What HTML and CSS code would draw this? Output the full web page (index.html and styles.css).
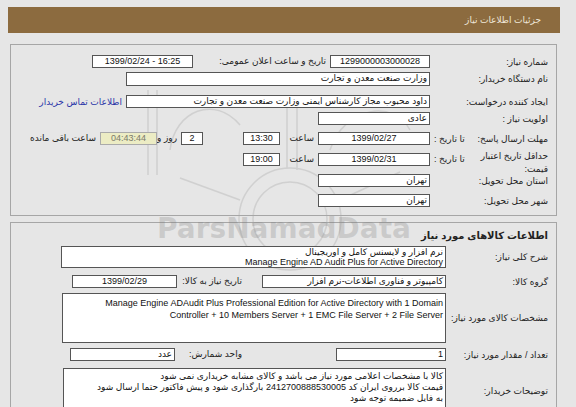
FILE: index.html
```html
<!DOCTYPE html>
<html lang="fa" dir="rtl">
<head>
<meta charset="utf-8">
<title>جزئیات اطلاعات نیاز</title>
<link rel="stylesheet" href="styles.css">
</head>
<body>
<svg class="logo" width="576" height="407" viewBox="0 0 576 407" aria-hidden="true">
  <g fill="none" stroke="#cbcbcb" stroke-width="1.5">
    <circle cx="290" cy="219" r="51"/>
    <circle cx="290" cy="219" r="37"/>
    <line x1="287" y1="95" x2="287" y2="168"/>
    <line x1="297" y1="95" x2="297" y2="170"/>
    <line x1="148" y1="90" x2="148" y2="175"/>
    <line x1="157" y1="90" x2="157" y2="175"/>
    <path d="M240 200 L180 178"/>
    <path d="M340 200 L400 172"/>
    <path d="M170 150 C 175 110, 215 95, 240 125"/>
    <path d="M330 150 C 345 105, 395 100, 410 130"/>
  </g>
</svg>

<div class="header">جزئیات اطلاعات نیاز</div>

<div class="panel p1">
  <div class="row r1">
    <div class="lbl">شماره نیاز:</div>
    <div class="box c w100">1299000003000028</div>
    <div class="lbl2 w137">تاریخ و ساعت اعلان عمومی:</div>
    <div class="box c w101 ltrbox">1399/02/24 - 16:25</div>
  </div>
  <div class="row r2">
    <div class="lbl">نام دستگاه خریدار:</div>
    <div class="box w304">وزارت صنعت معدن و تجارت</div>
  </div>
  <div class="row r3">
    <div class="lbl">ایجاد کننده درخواست:</div>
    <div class="box w304">داود محبوب مجاز کارشناس ایمنی وزارت صنعت معدن و تجارت</div>
    <a class="link" href="#">اطلاعات تماس خریدار</a>
  </div>
  <div class="row r4">
    <div class="lbl">اولویت نیاز :</div>
    <div class="box w112">عادی</div>
  </div>
  <div class="row r5">
    <div class="lbl split"><span>مهلت ارسال پاسخ:</span><span>تا تاریخ :</span></div>
    <div class="box c w112">1399/02/27</div>
    <div class="lbl2 w38">ساعت</div>
    <div class="box c w37">13:30</div>
    <div class="sp40"></div>
    <div class="box c w22">2</div>
    <div class="lbl2 w24">روز و</div>
    <div class="box c w57 remain">04:43:44</div>
    <div class="lbl2 pad4">ساعت باقی مانده</div>
  </div>
  <div class="row r6">
    <div class="lbl split two"><span class="main">حداقل تاریخ اعتبار<br>قیمت:</span><span class="sub">تا تاریخ :</span></div>
    <div class="box c w112">1399/02/31</div>
    <div class="lbl2 w38">ساعت</div>
    <div class="box c w37">19:00</div>
  </div>
  <div class="row r7">
    <div class="lbl">استان محل تحویل:</div>
    <div class="box w112">تهران</div>
  </div>
  <div class="row r8">
    <div class="lbl">شهر محل تحویل:</div>
    <div class="box w112">تهران</div>
  </div>
</div>

<div class="panel p2">
  <div class="title">اطلاعات کالاهای مورد نیاز</div>
  <div class="row q1">
    <div class="lbl">شرح کلی نیاز:</div>
    <div class="box multi w385 h22">نرم افزار و لایسنس کامل و اوریجینال<br>Manage Engine AD Audit Plus for Active Directory</div>
  </div>
  <div class="row q2">
    <div class="lbl">گروه کالا:</div>
    <div class="box w184">کامپیوتر و فناوری اطلاعات-نرم افزار</div>
    <div class="lbl2 w85">تاریخ نیاز به کالا:</div>
    <div class="box c w105">1399/02/29</div>
  </div>
  <div class="row q3">
    <div class="lbl">مشخصات کالای مورد نیاز:</div>
    <div class="box multi w384 h50"><div class="ltr">Manage Engine ADAudit Plus Professional Edition for Active Directory with 1 Domain<br>Controller + 10 Members Server + 1 EMC File Server + 2 File Server</div></div>
  </div>
  <div class="row q4">
    <div class="lbl">تعداد / مقدار مورد نیاز:</div>
    <div class="box w110">1</div>
    <div class="lbl2 w161">واحد شمارش:</div>
    <div class="box w105">عدد</div>
  </div>
  <div class="row q5">
    <div class="lbl">توضیحات خریدار:</div>
    <div class="box multi w383 h48">کالا با مشخصات اعلامی مورد نیاز می باشد و کالای مشابه خریداری نمی شود<br>قیمت کالا برروی ایران کد 2412700888530005 بارگذاری شود و پیش فاکتور حتما ارسال شود<br>به فایل ضمیمه توجه شود</div>
  </div>
</div>

<div class="watermark">ParsNamadData</div>
</body>
</html>
```

FILE: styles.css
```css
html, body {
  margin: 0;
  padding: 0;
}
body {
  background: #e6e6e6;
  font-family: "Liberation Sans", "DejaVu Sans", sans-serif;
  font-size: 9px;
  color: #222;
  width: 576px;
  height: 407px;
  overflow: hidden;
  position: relative;
}
.logo {
  position: absolute;
  left: 0;
  top: 0;
  z-index: -1;
  opacity: 0.8;
}
.header {
  margin: 7px 16px 0 0;
  width: 552px;
  height: 26px;
  box-sizing: border-box;
  background: #8c6b3f;
  color: #eee6d8;
  line-height: 26px;
  padding-right: 19px;
  font-size: 9px;
}
.panel {
  margin-right: 19px;
  width: 547px;
  box-sizing: border-box;
  border: 1px solid #a6a6a6;
}
.p1 {
  margin-top: 11px;
  height: 172px;
  padding-top: 10px;
}
.p2 {
  margin-top: 6px;
  height: 200px;
}
.row {
  display: flex;
  align-items: center;
}
.lbl {
  width: 126px;
  box-sizing: border-box;
  padding-right: 8px;
  flex: none;
  white-space: nowrap;
}
.p2 .lbl {
  width: 110px;
}
.split {
  display: flex;
  justify-content: space-between;
  padding-left: 4px;
}
.r6 {
  height: 13px;
  align-items: flex-start;
}
.two {
  align-items: flex-start;
  height: 13px;
}
.two .main {
  line-height: 13px;
  margin-top: -3px;
}
.two .sub {
  line-height: 13px;
}
.lbl2 {
  flex: none;
  box-sizing: border-box;
  padding-right: 4px;
  white-space: nowrap;
  line-height: 13px;
}
.pad4 { padding-right: 4px; }
.box {
  flex: none;
  box-sizing: border-box;
  height: 13px;
  background: #fff;
  border: 1px solid #555;
  line-height: 11px;
  padding: 0 2px;
  white-space: nowrap;
  overflow: hidden;
  color: #111;
}
.c { text-align: center; }
.ltrbox { direction: ltr; }
.multi {
  white-space: normal;
  line-height: 10px;
}
.ltr {
  direction: ltr;
  text-align: right;
  line-height: 12px;
  padding-top: 3px;
}
.remain {
  background: #ececc4;
  color: #7a7a6a;
  border-color: #aaa;
}
.link {
  color: #2a35a8;
  text-decoration: none;
  margin-right: 4px;
  white-space: nowrap;
}
.sp40 { width: 40px; flex: none; }
.w22 { width: 22px; }
.w24 { width: 24px; }
.w37 { width: 37px; }
.w38 { width: 38px; }
.w57 { width: 57px; }
.w85 { width: 85px; padding-right: 20px; }
.w100 { width: 100px; }
.w101 { width: 101px; }
.w105 { width: 105px; }
.w110 { width: 110px; text-align: right; }
.w112 { width: 112px; }
.w137 { width: 137px; }
.w161 { width: 161px; padding-right: 94px; }
.w184 { width: 184px; }
.w304 { width: 304px; }
.w383 { width: 383px; }
.w384 { width: 384px; }
.w385 { width: 385px; }
.h22 { height: 22px; }
.h48 { height: 48px; }
.h50 { height: 50px; }

.r1 { margin-top: 0; }
.r2 { margin-top: 4px; height: 14px; }
.r2 .box { height: 14px; }
.r3 { margin-top: 9px; }
.r4 { margin-top: 4px; }
.r5 { margin-top: 7px; }
.r6 { margin-top: 8px; }
.r7 { margin-top: 8px; }
.r8 { margin-top: 7px; }

.title {
  font-weight: bold;
  font-size: 10px;
  padding: 6px 8px 0 0;
  height: 17px;
  line-height: 13px;
}
.q1 { margin-top: 0; }
.q2 { margin-top: 7px; }
.q3 { margin-top: 5px; }
.q4 { margin-top: 5px; }
.q5 { margin-top: 7px; align-items: flex-start; }
.q5 .lbl { padding-top: 18px; }
.q5 .multi { padding-top: 2px; line-height: 11px; }

.watermark {
  position: absolute;
  left: 157px;
  top: 212px;
  font-family: "DejaVu Sans", sans-serif;
  font-weight: bold;
  font-size: 28px;
  color: rgba(120, 120, 120, 0.25);
  direction: ltr;
  pointer-events: none;
}
```
